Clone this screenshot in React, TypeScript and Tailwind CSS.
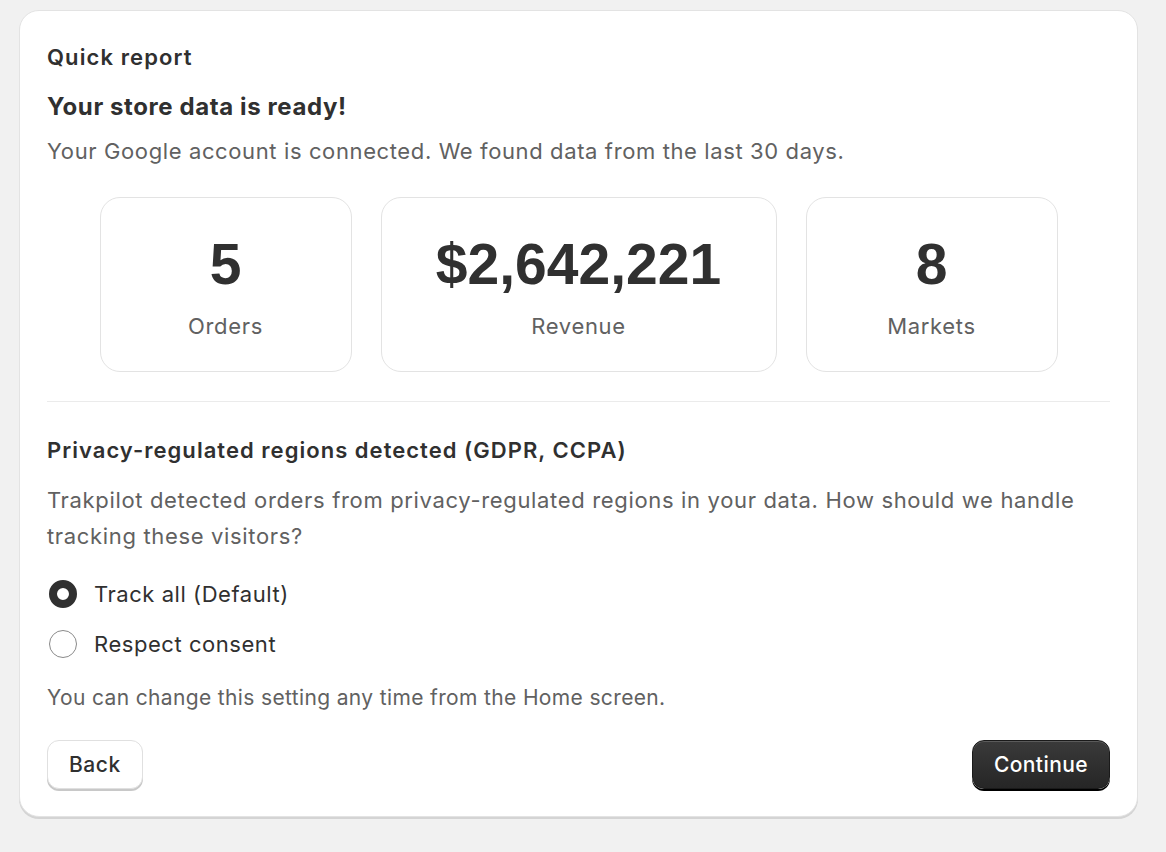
import React, { useState } from "react";

const sans = "font-['Inter','Noto_Sans',sans-serif]";

function Stat({ value, label, width }: { value: string; label: string; width: string }) {
  return (
    <div className={`${width} flex flex-col items-center rounded-[20px] border border-[#e3e3e3] bg-white pt-[34px] pb-[31px]`}>
      <div className="font-['Liberation_Sans','Arial',sans-serif] text-[57px] font-bold leading-[64px] text-[#303030]">{value}</div>
      <div className="mt-4 text-[22px] leading-[28px] tracking-[0.03em] text-[#616161]">{label}</div>
    </div>
  );
}

function Radio({ checked, label, onClick }: { checked: boolean; label: string; onClick: () => void }) {
  return (
    <div onClick={onClick} className="flex h-9 cursor-pointer items-center gap-[17px] pl-[2px]">
      {checked ? (
        <span className="h-[28px] w-[28px] rounded-full border-[8px] border-[#303030] bg-white" />
      ) : (
        <span className="h-[28px] w-[28px] rounded-full border border-[#8a8a8a] bg-white" />
      )}
      <span className="text-[22px] leading-[28px] tracking-[0.025em] text-[#303030]">{label}</span>
    </div>
  );
}

export default function App() {
  const [mode, setMode] = useState("all");

  return (
    <div className={`${sans} min-h-[852px] bg-[#f1f1f1] pt-[10px] pl-[19px] pr-[28px]`}>
      <div className="w-[1119px] rounded-[20px] border border-[#e3e3e3] bg-white px-[27px] pt-[32px] pb-[27px] shadow-[0_2px_0_0_#d4d4d4]">
        <h2 className="text-[22px] font-semibold leading-[28px] tracking-[0.05em] text-[#303030]">Quick report</h2>
        <h1 className="mt-[21px] text-[24px] font-bold leading-[30px] tracking-[0.025em] text-[#303030]">Your store data is ready!</h1>
        <p className="mt-[15px] text-[22px] leading-[28px] tracking-[0.028em] text-[#616161]">
          Your Google account is connected. We found data from the last 30 days.
        </p>

        <div className="mt-[32px] flex justify-center gap-[29px]">
          <Stat value="5" label="Orders" width="w-[252px]" />
          <Stat value="$2,642,221" label="Revenue" width="w-[396px]" />
          <Stat value="8" label="Markets" width="w-[252px]" />
        </div>

        <div className="mt-[29px] h-px bg-[#ebebeb]" />

        <h3 className="mt-[33px] text-[22px] font-semibold leading-[30px] tracking-[0.047em] text-[#303030]">
          Privacy-regulated regions detected (GDPR, CCPA)
        </h3>
        <p className="mt-[17px] text-[22px] leading-[36px] tracking-[0.03em] text-[#616161]">
          Trakpilot detected orders from privacy-regulated regions in your data. How should we handle tracking these visitors?
        </p>

        <div className="mt-[22px] flex flex-col gap-[14px]">
          <Radio checked={mode === "all"} label="Track all (Default)" onClick={() => setMode("all")} />
          <Radio checked={mode === "consent"} label="Respect consent" onClick={() => setMode("consent")} />
        </div>

        <p className="mt-[22px] text-[21px] leading-[28px] tracking-[0.017em] text-[#616161]">
          You can change this setting any time from the Home screen.
        </p>

        <div className="mt-[28px] flex items-center justify-between">
          <button className="h-[49px] rounded-[12px] border border-[#e0e0e0] bg-white px-[21px] text-[21px] font-medium tracking-[0.025em] text-[#303030] shadow-[0_2px_0_0_#c8c8c8]">
            Back
          </button>
          <button className="h-[49px] rounded-[12px] border border-[#1a1a1a] bg-gradient-to-b from-[#3a3a3a] to-[#262626] px-[21px] text-[21px] font-medium tracking-[0.02em] text-white shadow-[inset_0_1px_0_0_#5a5a5a,0_2px_0_0_#000]">
            Continue
          </button>
        </div>
      </div>
    </div>
  );
}
